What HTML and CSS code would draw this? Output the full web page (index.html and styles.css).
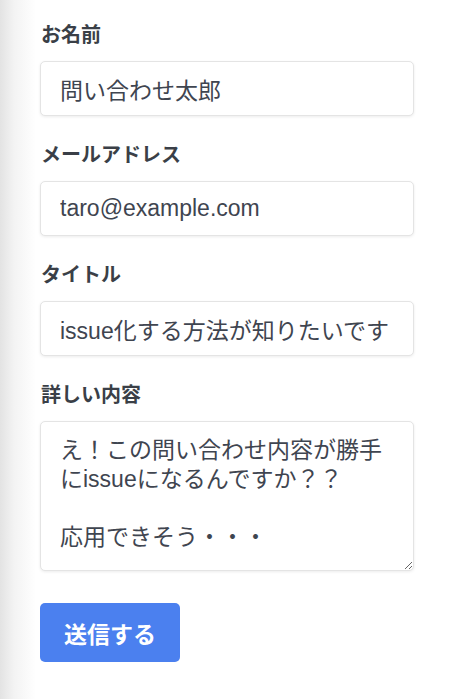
FILE: index.html
```
<!DOCTYPE html>
<html lang="ja">
<head>
<meta charset="utf-8">
<link rel="stylesheet" href="styles.css">
</head>
<body>
<form class="form">
  <div class="field">
    <label class="label">お名前</label>
    <input class="input" type="text" value="問い合わせ太郎">
  </div>
  <div class="field">
    <label class="label">メールアドレス</label>
    <input class="input" type="text" value="taro@example.com">
  </div>
  <div class="field">
    <label class="label">タイトル</label>
    <input class="input" type="text" value="issue化する方法が知りたいです">
  </div>
  <div class="field">
    <label class="label">詳しい内容</label>
    <textarea class="textarea">え！この問い合わせ内容が勝手にissueになるんですか？？

応用できそう・・・</textarea>
  </div>
  <button class="button" type="button">送信する</button>
</form>
</body>
</html>
```
FILE: styles.css
```
html, body {
  margin: 0;
  padding: 0;
  height: 100%;
}
body {
  background: linear-gradient(to right, #e3e3e3 0px, #f3f3f3 14px, #ffffff 36px);
  font-family: "Liberation Sans", "Noto Sans CJK JP", sans-serif;
  color: #374151;
}
.form {
  display: flex;
  flex-direction: column;
  padding: 22px 0 0 40px;
  width: 374px;
}
.field {
  display: flex;
  flex-direction: column;
  gap: 12px;
  margin-bottom: 26px;
}
.label {
  font-size: 20px;
  font-weight: 700;
  line-height: 27px;
  color: #3a3f47;
  padding-left: 1px;
}
.input, .textarea {
  box-sizing: border-box;
  width: 374px;
  font-family: "Liberation Sans", "Noto Sans CJK JP", sans-serif;
  font-size: 23px;
  color: #3f4550;
  background: #fff;
  border: 1px solid #e4e4e4;
  border-radius: 5px;
  box-shadow: 0 1px 3px rgba(0, 0, 0, 0.08);
  outline: none;
  margin: 0;
}
.input {
  height: 55px;
  padding: 0 19px;
  line-height: 30px;
}
.textarea {
  height: 150px;
  padding: 14px 19px;
  line-height: 29px;
  resize: vertical;
}
.field:last-of-type {
  margin-bottom: 32px;
}
.button {
  align-self: flex-start;
  height: 59px;
  width: 140px;
  padding: 0;
  border: none;
  border-radius: 5px;
  background: #4b80ef;
  color: #fff;
  font-family: "Liberation Sans", "Noto Sans CJK JP", sans-serif;
  font-size: 23px;
  font-weight: 700;
}
```
